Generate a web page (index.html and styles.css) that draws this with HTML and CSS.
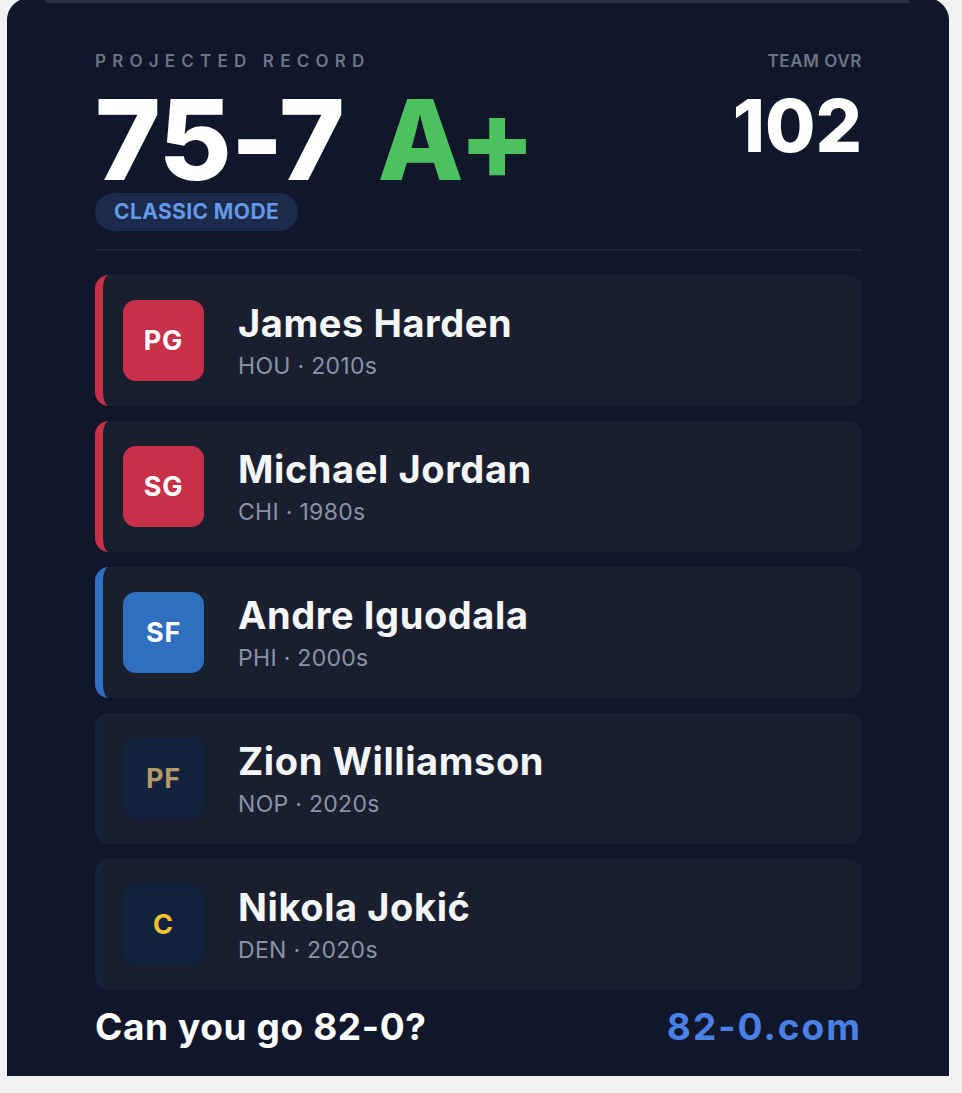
FILE: index.html
```html
<!DOCTYPE html>
<html lang="en">
<head>
    <meta charset="UTF-8">
    <meta name="viewport" content="width=device-width, initial-scale=1.0">
    <title>82-0 - Projected Record</title>
    <link rel="stylesheet" href="styles.css">
</head>
<body>
    <div class="card">
        <div class="card-top"></div>

        <div class="header">
            <div class="record-block">
                <div class="label spaced">PROJECTED RECORD</div>
                <div class="record">75-7 <span class="grade">A+</span></div>
                <span class="mode">CLASSIC MODE</span>
            </div>
            <div class="ovr-block">
                <div class="label">TEAM OVR</div>
                <div class="ovr">102</div>
            </div>
        </div>

        <div class="divider"></div>

        <div class="roster">
            <div class="player bar-red">
                <div class="pos pos-red">PG</div>
                <div class="info">
                    <div class="name">James Harden</div>
                    <div class="meta">HOU · 2010s</div>
                </div>
            </div>
            <div class="player bar-red">
                <div class="pos pos-red">SG</div>
                <div class="info">
                    <div class="name">Michael Jordan</div>
                    <div class="meta">CHI · 1980s</div>
                </div>
            </div>
            <div class="player bar-blue">
                <div class="pos pos-blue">SF</div>
                <div class="info">
                    <div class="name">Andre Iguodala</div>
                    <div class="meta">PHI · 2000s</div>
                </div>
            </div>
            <div class="player bar-navy">
                <div class="pos pos-navy gold">PF</div>
                <div class="info">
                    <div class="name">Zion Williamson</div>
                    <div class="meta">NOP · 2020s</div>
                </div>
            </div>
            <div class="player bar-navy">
                <div class="pos pos-navy yellow">C</div>
                <div class="info">
                    <div class="name">Nikola Jokić</div>
                    <div class="meta">DEN · 2020s</div>
                </div>
            </div>
        </div>

        <div class="footer">
            <span class="cta">Can you go 82-0?</span>
            <span class="site">82-0.com</span>
        </div>
    </div>
</body>
</html>
```

FILE: styles.css
```css
body {
    margin: 0;
    background: #f2f2f5;
    font-family: Inter, "Noto Sans", Arial, sans-serif;
    height: 1093px;
    overflow: hidden;
}
.card {
    margin: -2px 0 0 7px;
    width: 942px;
    height: 1078px;
    box-sizing: border-box;
    background: #10172a;
    border-radius: 22px 22px 0 0;
    padding: 0 87px 0 88px;
    color: #fff;
}
.card-top {
    height: 5px;
    margin: 0 0 0 -50px;
    width: 865px;
    background: #2a3040;
}
.header {
    display: flex;
    justify-content: space-between;
    margin-top: 48px;
}
.label {
    font-size: 17px;
    line-height: 20px;
    font-weight: 600;
    color: #6c7485;
    letter-spacing: 0.6px;
}
.label.spaced {
    letter-spacing: 6.2px;
}
.record {
    margin-top: 18px;
    font-size: 112px;
    line-height: 100px;
    font-weight: 800;
    letter-spacing: -1px;
    word-spacing: 10px;
}
.grade {
    color: #4cc25f;
}
.mode {
    display: inline-block;
    margin-top: 4px;
    height: 38px;
    line-height: 38px;
    padding: 0 19px;
    border-radius: 19px;
    background: #1c2a4b;
    color: #6498e6;
    font-size: 21px;
    font-weight: 700;
    letter-spacing: 0.4px;
}
.ovr-block {
    text-align: right;
}
.ovr {
    margin-top: 15px;
    font-size: 73px;
    line-height: 80px;
    font-weight: 800;
}
.divider {
    height: 2px;
    background: #1f2637;
    margin: 18px 0 24px;
}
.roster {
    display: flex;
    flex-direction: column;
    gap: 15px;
}
.player {
    display: flex;
    align-items: center;
    gap: 34px;
    height: 131px;
    box-sizing: border-box;
    padding-left: 20px;
    border-left: 8px solid;
    border-radius: 14px;
    background: #1a1f30;
}
.bar-red { border-left-color: #c8304a; }
.bar-blue { border-left-color: #2f6fc0; }
.bar-navy { border-left-color: #16223b; }
.pos {
    width: 81px;
    height: 81px;
    border-radius: 13px;
    display: flex;
    align-items: center;
    justify-content: center;
    font-size: 27px;
    font-weight: 700;
    letter-spacing: 0.8px;
}
.pos-red { background: #c8304a; }
.pos-blue { background: #2f6fc0; }
.pos-navy { background: #13223e; }
.gold { color: #b49a64; }
.yellow { color: #f1c232; }
.name {
    font-size: 38px;
    line-height: 44px;
    font-weight: 700;
    color: #f5f6f8;
    letter-spacing: 0.6px;
}
.meta {
    margin-top: 7px;
    font-size: 23px;
    line-height: 28px;
    color: #8a92a6;
    letter-spacing: 0.3px;
}
.footer {
    display: flex;
    justify-content: space-between;
    margin-top: 15px;
    font-size: 37px;
    line-height: 44px;
    font-weight: 700;
}
.cta {
    letter-spacing: 0.6px;
}
.site {
    color: #4a80e6;
    letter-spacing: 2px;
}
```
